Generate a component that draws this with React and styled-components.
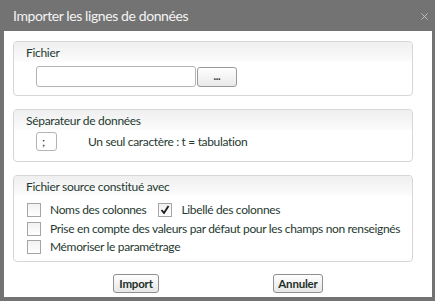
import React from "react";
import styled, { createGlobalStyle } from "styled-components";

const Global = createGlobalStyle`
  html, body { margin: 0; padding: 0; background: #737373; }
  body { font-family: Lato, "Open Sans", sans-serif; }
`;

const Window = styled.div`
  width: 435px;
  height: 301px;
  background: #737373;
  border-radius: 6px 6px 0 0;
  display: flex;
  flex-direction: column;
  box-sizing: border-box;
  padding: 0 3px 4px 4px;
`;

const TitleBar = styled.div`
  height: 31px;
  display: flex;
  align-items: center;
  justify-content: space-between;
  padding: 0 4px 0 9px;
  color: #f4f4f4;
  font-size: 14px;
  letter-spacing: -0.4px;
`;

const Close = styled.svg`
  width: 7px;
  height: 7px;
  margin-top: 1px;
`;

const Body = styled.div`
  flex: 1;
  background: #fff;
  padding: 10px 0 0 9px;
  display: flex;
  flex-direction: column;
  gap: 13px;
`;

const Group = styled.div`
  width: 400px;
  height: ${(p) => p.h}px;
  box-sizing: border-box;
  border: 1px solid #d6d6d6;
  border-radius: 4px;
  display: flex;
  flex-direction: column;
`;

const Legend = styled.div`
  height: 20px;
  padding-left: 12px;
  display: flex;
  align-items: center;
  font-size: 12px;
  letter-spacing: -0.3px;
  color: #1f3a31;
  background: linear-gradient(#efefef, #fcfcfc);
  border-radius: 4px 4px 0 0;
`;

const Row = styled.div`
  display: flex;
  align-items: center;
  padding-left: ${(p) => p.pl ?? 22}px;
  margin-top: ${(p) => p.mt ?? 0}px;
  gap: ${(p) => p.gap ?? 0}px;
  font-size: 12px;
  letter-spacing: -0.34px;
  color: #1f3a31;
  white-space: nowrap;
`;

const TextBox = styled.div`
  width: ${(p) => p.w}px;
  height: ${(p) => p.hgt}px;
  box-sizing: border-box;
  border: 1px solid #b4b4b4;
  border-radius: 3px;
  background: #fff;
  font-size: 12px;
  color: #222;
  display: flex;
  align-items: center;
  padding-left: 5px;
`;

const SmallButton = styled.div`
  width: 40px;
  height: 20px;
  box-sizing: border-box;
  border: 1px solid #9a9a9a;
  border-radius: 3px;
  background: linear-gradient(#ffffff, #e9e9e9);
  display: flex;
  align-items: center;
  justify-content: center;
  font-size: 11px;
  font-weight: bold;
  color: #333;
  margin-left: 1px;
  padding-bottom: 3px;
`;

const Check = styled.div`
  width: 14px;
  height: 14px;
  box-sizing: border-box;
  border: 1px solid #a5a5a5;
  background: linear-gradient(#f2f2f2, #ffffff);
  display: flex;
  align-items: center;
  justify-content: center;
  margin-right: 9px;
  flex: none;
`;

const Item = styled.div`
  display: flex;
  align-items: center;
  margin-right: ${(p) => p.mr ?? 0}px;
`;

const Footer = styled.div`
  display: flex;
  justify-content: center;
  gap: 114px;
  margin-top: -1px;
  padding-right: 9px;
`;

const Button = styled.div`
  width: ${(p) => p.w}px;
  height: 19px;
  box-sizing: border-box;
  border: 1px solid #8f8f8f;
  border-radius: 3px;
  background: linear-gradient(#ffffff, #e6e6e6);
  display: flex;
  align-items: center;
  justify-content: center;
  font-size: 11.5px;
  font-weight: bold;
  letter-spacing: -0.2px;
  color: #1f2f2a;
`;

const CheckBox = ({ checked, label, mr }) => (
  <Item mr={mr}>
    <Check>
      {checked && (
        <svg width="10" height="10" viewBox="0 0 10 10">
          <path d="M1.5 5 L4 8 L8.5 1" fill="none" stroke="#1c1c1c" strokeWidth="1.8" />
        </svg>
      )}
    </Check>
    {label}
  </Item>
);

export default function App() {
  return (
    <>
      <Global />
      <Window>
        <TitleBar>
          <span>Importer les lignes de données</span>
          <Close viewBox="0 0 7 7">
            <path d="M0.5 0.5 L6.5 6.5 M6.5 0.5 L0.5 6.5" stroke="#c4c4c4" strokeWidth="0.9" />
          </Close>
        </TitleBar>
        <Body>
          <Group h={55}>
            <Legend>Fichier</Legend>
            <Row mt={4}>
              <TextBox w={160} hgt={21} />
              <SmallButton>...</SmallButton>
            </Row>
          </Group>
          <Group h={53}>
            <Legend>Séparateur de données</Legend>
            <Row mt={2} gap={31}>
              <TextBox w={21} hgt={19}>;</TextBox>
              <span>Un seul caractère : t = tabulation</span>
            </Row>
          </Group>
          <Group h={87}>
            <Legend>Fichier source constitué avec</Legend>
            <Row pl={13} mt={6}>
              <CheckBox label="Noms des colonnes" mr={12} />
              <CheckBox label="Libellé des colonnes" checked />
            </Row>
            <Row pl={13} mt={4}>
              <CheckBox label="Prise en compte des valeurs par défaut pour les champs non renseignés" />
            </Row>
            <Row pl={13} mt={3}>
              <CheckBox label="Mémoriser le paramétrage" />
            </Row>
          </Group>
          <Footer>
            <Button w={46}>Import</Button>
            <Button w={50}>Annuler</Button>
          </Footer>
        </Body>
      </Window>
    </>
  );
}
